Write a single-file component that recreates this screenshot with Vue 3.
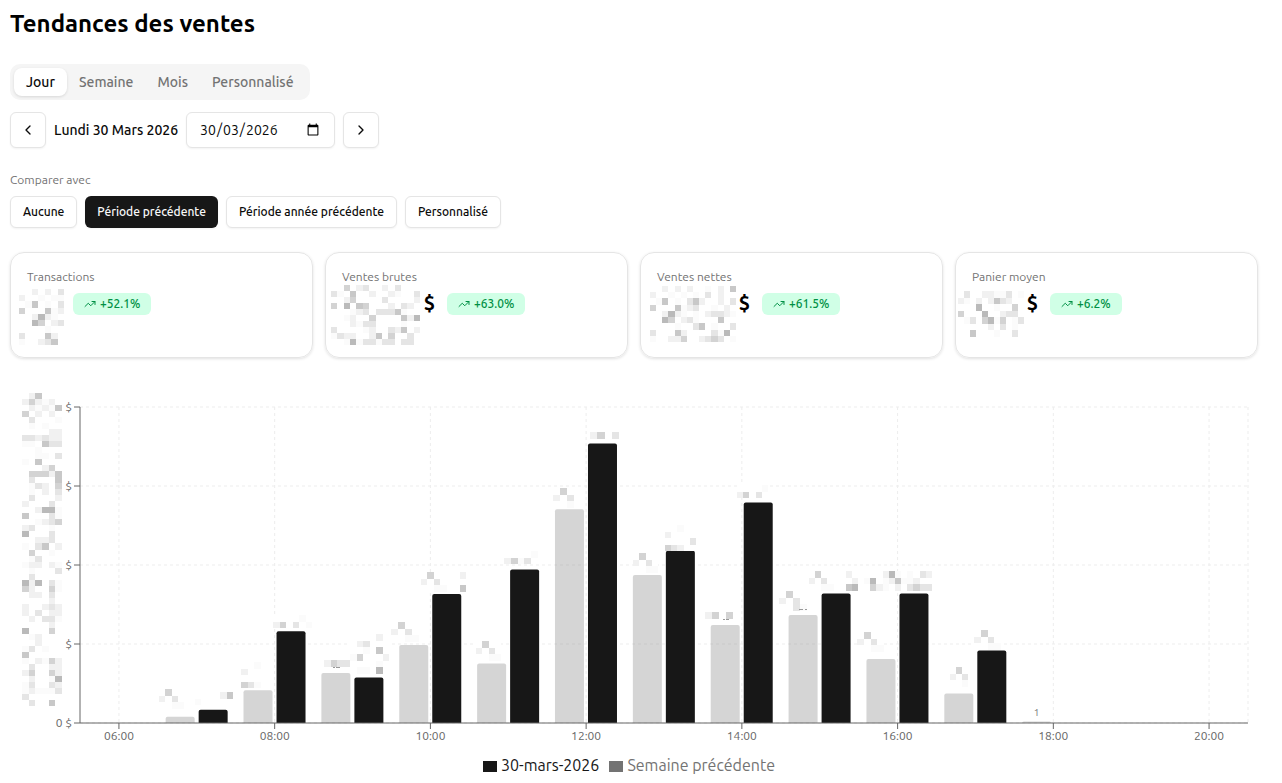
<script setup>
import { ref, computed, onMounted, onBeforeUnmount } from 'vue'

const tabs = ['Jour', 'Semaine', 'Mois', 'Personnalisé']
const activeTab = ref('Jour')
const comparisons = ['Aucune', 'Période précédente', 'Période année précédente', 'Personnalisé']
const activeComparison = ref('Période précédente')
const date = ref('2026-03-30')

// Masked figures are drawn as small mosaics: one character per cell, 1 (faint) to 6 (dark).
const shades = ['', '#fbfbfb', '#f1f1f1', '#e5e5e5', '#d3d3d3', '#c8c8c8', '#bababa']
const cells = (rows) =>
  rows.flatMap((row, y) =>
    [...row].flatMap((c, x) => (c === '.' ? [] : [{ x, y, fill: shades[Number(c)] }]))
  )

const cards = [
  {
    label: 'Transactions', trend: '+52.1%', width: 38, currency: '',
    mask: { x: -8, y: 0, w: 45, h: 56, rows: ['..2.2.3', '2..1.11', '.15.1.3', '4...512', '..2621.', '..64.23', '....1..', '3...52.', '1..235.'] }
  },
  {
    label: 'Ventes brutes', trend: '+63.0%', width: 97, currency: '$',
    mask: { x: -11, y: -4, w: 89, h: 60, rows: ['..4.23..2.3...', '31.5..2..21..3', '..24....3....2', '4.6.54...2.32.', '...123.33351..', '..12..4....526', '...2133....1..', '3....12..325.2', '1322..25.4..3.', '..16133133.33.'] }
  },
  {
    label: 'Ventes nettes', trend: '+61.5%', width: 97, currency: '$',
    mask: { x: -7, y: -3, w: 86, h: 56, rows: ['..2.2.2..1.2.5', '2..1.1.1.3.2..', '.15.1.352..2.3', '4...5123..1.2.', '..2621.1.23321', '..64.231...5..', '....1..35.1..3', '3...52....316.', '1..224..2343.1'] }
  },
  {
    label: 'Panier moyen', trend: '+6.2%', width: 70, currency: '$',
    mask: { x: -14, y: 2, w: 66, h: 46, rows: ['.3..22113.1', '21.2.2532..', '...6..1..4.', '4...6..233.', '.13.4614.13', '.....2.3.1.', '..5...1..3.'] }
  }
]

const axisMask = [
  '.25...', '24212.', '.21215', '4.2.2.', '.3...1', '.1.1..', '....22', '332322', '11.533', '..1...',
  '..11.3', '1.5...', '...24.', '.44425', '.3...5', '.132.4', '.1.2.3', '.3...2', '2...3.', '..2661',
  '5...31', '..1234', '23..1.', '6...3.', '..223.', '1.35.2', '.4..1.', '.13...', '122.21', '.1...3',
  '.3....', '626.31', '42..41', '.22.3.', '....2.', '2..232', '2.3.22', '.2.331', '....2.', '6...4.',
  '.12...', '..2...', '13.1..', '5.....', '1.2142', '.3..22', '24..42', '.2..16', '13..32', '121113',
  '3.....', '.3..5.'
]

const peak = ['.4..', '2.3.', '..11']
const maxValue = 3160
// prev / curr: bar values; prevMask / currMask: [dx, dy, rows, width] relative to the bar's top left corner.
const hours = [
  { hour: '06:00' },
  { hour: '07:00', prev: 63, prevMask: [-7, -28, peak, 25], curr: 133, currMask: [-4, -18, ['....25', '1.....'], 38] },
  { hour: '08:00', prev: 327, prevMask: [-3, -28, ['..1', '2..', '...', '431'], 20], curr: 918, currMask: [-4, -16, ['....1.', '24.3.1'], 39] },
  { hour: '09:00', prev: 500, prevMask: [3, -13, ['2433'], 26], residue: [[12, 2], [15, 4]], curr: 455, currMask: [-4, -44, ['....2.', '.23...', '..1.5.', '14...2', '....1.', '.11.6.'], 39] },
  { hour: '10:00', prev: 779, prevMask: [-8, -23, peak, 28], curr: 1289, currMask: [-11, -22, ['.4....2', '2.3....', '..11..5'], 45] },
  { hour: '11:00', prev: 596, prevMask: [-1, -22, peak, 25], curr: 1536, currMask: [-6, -18, ['....1', '2413.'], 34] },
  { hour: '12:00', prev: 2138, prevMask: [-2, -21, ['.4..', '2.3.', '..1.'], 28], curr: 2794, currMask: [2, -12, ['24.3'], 29] },
  { hour: '13:00', prev: 1480, prevMask: [0, -22, peak, 25], curr: 1722, currMask: [-1, -26, ['..1..', '2....', '....3', '432..'], 31] },
  { hour: '14:00', prev: 980, prevMask: [-6, -13, ['24.4'], 28], residue: [[12, 2], [15, 3]], curr: 2204, currMask: [-7, -18, ['....1', '24.3.'], 31] },
  { hour: '15:00', prev: 1080, prevMask: [-10, -24, ['.4..', '2.3.', '..31'], 28], residue: [[10, 4], [16, 2]], curr: 1296, currMask: [-13, -22, ['.4....2.', '2.3....2', '..11..56'], 49] },
  { hour: '16:00', prev: 641, prevMask: [-9, -27, peak, 27], curr: 1296, currMask: [-35, -22, ['...261.1.32', '16.125112..', '.421.2.3433'], 68] },
  { hour: '17:00', prev: 296, prevMask: [6, -26, ['.4.', '2.3', '..1'], 18], curr: 725, currMask: [-3, -21, peak, 27] },
  { hour: '18:00', prev: 16, prevLabel: '1' },
  { hour: '19:00' },
  { hour: '20:00' }
]

const chart = ref(null)
const width = ref(1248)
let observer
onMounted(() => {
  const measure = () => { width.value = Math.round(chart.value.clientWidth) }
  measure()
  observer = new ResizeObserver(measure)
  observer.observe(chart.value)
})
onBeforeUnmount(() => observer && observer.disconnect())

const height = 366
const plot = computed(() => ({ left: 70, right: width.value - 10, top: 25, bottom: 341 }))
const band = computed(() => (plot.value.right - plot.value.left) / hours.length)
const barWidth = computed(() => Math.max(2, Math.floor((band.value * 0.8 - 4) / 2)))
const yTicks = [0, 79, 158, 237, 316].map((v) => ({ y: 341 - v, label: v ? '$' : '0 $' }))
const xTicks = computed(() =>
  hours
    .map((h, i) => ({ label: h.hour, x: plot.value.left + band.value * (i + 0.5) }))
    .filter((_, i) => i % 2 === 0)
)
const bars = computed(() =>
  hours.flatMap((h, i) => {
    const start = plot.value.left + band.value * (i + 0.1)
    const bottom = plot.value.bottom
    const scale = (bottom - plot.value.top) / maxValue
    const out = []
    const add = (kind, x, value, mask, label, residue = []) => {
      const top = bottom - value * scale
      const r = Math.min(2, value * scale)
      out.push({
        id: kind + h.hour, kind, x, top, label, residue,
        d: `M${x},${bottom}V${top + r}Q${x},${top} ${x + r},${top}H${x + barWidth.value - r}Q${x + barWidth.value},${top} ${x + barWidth.value},${top + r}V${bottom}Z`,
        mask: mask && { x: Math.round(x + mask[0]), y: Math.round(top + mask[1]), w: mask[3], h: Math.round(mask[2].length * 6.6), rows: mask[2] }
      })
    }
    if (h.prev) add('prev', start, h.prev, h.prevMask, h.prevLabel, h.residue)
    if (h.curr) add('curr', start + barWidth.value + 4, h.curr, h.currMask)
    return out
  })
)
</script>

<template>
  <main class="page">
    <h1>Tendances des ventes</h1>

    <div class="tabs" role="tablist" aria-label="Période">
      <button
        v-for="tab in tabs" :key="tab" type="button" role="tab" class="tab"
        :class="{ active: tab === activeTab }" :aria-selected="tab === activeTab" @click="activeTab = tab"
      >{{ tab }}</button>
    </div>

    <div class="date-row">
      <button type="button" class="square" aria-label="Jour précédent">
        <svg class="icon" viewBox="0 0 24 24"><path d="m15 18-6-6 6-6" /></svg>
      </button>
      <label class="day" for="date">Lundi 30 Mars 2026</label>
      <input id="date" v-model="date" class="date-field" type="date" lang="fr">
      <button type="button" class="square" aria-label="Jour suivant">
        <svg class="icon" viewBox="0 0 24 24"><path d="m9 18 6-6-6-6" /></svg>
      </button>
    </div>

    <section class="compare" aria-labelledby="compare-title">
      <p id="compare-title" class="caption">Comparer avec</p>
      <div class="options">
        <button
          v-for="item in comparisons" :key="item" type="button" class="option"
          :class="{ active: item === activeComparison }" :aria-pressed="item === activeComparison"
          @click="activeComparison = item"
        >{{ item }}</button>
      </div>
    </section>

    <section class="cards">
      <article v-for="card in cards" :key="card.label" class="card">
        <p class="caption">{{ card.label }}</p>
        <div class="figures">
          <div class="value" :style="{ width: card.width + 'px' }">
            <svg
              class="mask" :viewBox="`0 0 ${card.mask.rows[0].length} ${card.mask.rows.length}`" preserveAspectRatio="none"
              :style="{ left: card.mask.x + 'px', top: card.mask.y + 'px', width: card.mask.w + 'px', height: card.mask.h + 'px' }"
            >
              <rect v-for="c in cells(card.mask.rows)" :key="c.x + '-' + c.y" :x="c.x" :y="c.y" width="1" height="1" :fill="c.fill" />
            </svg>
            <span>{{ card.currency }}</span>
          </div>
          <span class="badge">
            <svg class="icon" viewBox="0 0 24 24"><path d="M16 7h6v6" /><path d="m22 7-8.5 8.5-5-5L2 17" /></svg>
            {{ card.trend }}
          </span>
        </div>
      </article>
    </section>

    <section ref="chart" class="chart">
      <svg class="plot" :width="width" :height="height" role="img" aria-label="Ventes par heure">
        <g class="grid">
          <line v-for="t in yTicks" :key="'h' + t.y" :x1="plot.left" :x2="plot.right" :y1="t.y" :y2="t.y" />
          <line v-for="t in xTicks" :key="'v' + t.label" :x1="t.x" :x2="t.x" :y1="plot.top" :y2="plot.bottom" />
          <line :x1="plot.right" :x2="plot.right" :y1="plot.top" :y2="plot.bottom" />
        </g>
        <path v-for="b in bars" :key="b.id" :d="b.d" :class="b.kind" />
        <g class="axis">
          <line :x1="plot.left" :x2="plot.left" :y1="plot.top" :y2="plot.bottom" />
          <line :x1="plot.left" :x2="plot.right" :y1="plot.bottom" :y2="plot.bottom" />
          <line v-for="t in yTicks" :key="'y' + t.y" :x1="plot.left - 6" :x2="plot.left" :y1="t.y" :y2="t.y" />
          <line v-for="t in xTicks" :key="'x' + t.label" :x1="t.x" :x2="t.x" :y1="plot.bottom" :y2="plot.bottom + 6" />
        </g>
        <g class="ticks">
          <text v-for="t in yTicks" :key="t.y" :x="plot.left - 8" :y="t.y + 4" text-anchor="end">{{ t.label }}</text>
          <text v-for="t in xTicks" :key="t.label" :x="t.x" :y="plot.bottom + 17" text-anchor="middle">{{ t.label }}</text>
        </g>
        <template v-for="b in bars" :key="'m' + b.id">
          <svg
            v-if="b.mask" :x="b.mask.x" :y="b.mask.y" :width="b.mask.w" :height="b.mask.h"
            :viewBox="`0 0 ${b.mask.rows[0].length} ${b.mask.rows.length}`" preserveAspectRatio="none" shape-rendering="crispEdges"
          >
            <rect :width="b.mask.rows[0].length" :height="b.mask.rows.length" fill="#fff" />
            <rect v-for="c in cells(b.mask.rows)" :key="c.x + '-' + c.y" :x="c.x" :y="c.y" width="1" height="1" :fill="c.fill" />
          </svg>
          <rect v-for="r in b.residue" :key="r[0]" class="residue" :x="Math.round(b.x) + r[0]" :y="Math.round(b.top) - 6" :width="r[1]" height="1" />
          <text v-if="b.label" class="bar-label" :x="b.x + barWidth / 2" :y="b.top - 5" text-anchor="middle">{{ b.label }}</text>
        </template>
        <svg x="12" y="11" width="40" height="313" viewBox="0 0 6 52" preserveAspectRatio="none" shape-rendering="crispEdges">
          <rect v-for="c in cells(axisMask)" :key="c.x + '-' + c.y" :x="c.x" :y="c.y" width="1" height="1" :fill="c.fill" />
        </svg>
      </svg>
      <ul class="legend">
        <li class="current">30-mars-2026</li>
        <li class="previous">Semaine précédente</li>
      </ul>
    </section>
  </main>
</template>

<style>
body {
  margin: 0;
  background: #fff;
}
</style>

<style scoped>
.page {
  padding: 8px 24px 6px 10px;
  color: #0a0a0a;
  font-family: Ubuntu, "Noto Sans", sans-serif;
  font-size: 14px;
  line-height: 20px;
}
h1 {
  margin: 0 0 24px;
  font-size: 24px;
  line-height: 32px;
  font-weight: 700;
  color: #000;
}
p {
  margin: 0;
}
button,
input {
  font: inherit;
  color: inherit;
}
button {
  cursor: pointer;
}
.icon {
  fill: none;
  stroke: currentColor;
  stroke-width: 2;
  stroke-linecap: round;
  stroke-linejoin: round;
}
.tabs {
  display: flex;
  width: fit-content;
  box-sizing: border-box;
  height: 36px;
  padding: 4px;
  border-radius: 10px;
  background: #f5f5f5;
}
.tab {
  padding: 0 12px;
  border: 0;
  border-radius: 8px;
  background: none;
  color: #737373;
  font-weight: 500;
}
.tab.active {
  background: #fff;
  color: #0a0a0a;
  box-shadow: 0 1px 3px rgba(0, 0, 0, 0.12);
}
.date-row {
  display: flex;
  align-items: center;
  gap: 8px;
  margin-top: 12px;
}
.square {
  display: grid;
  place-items: center;
  width: 36px;
  height: 36px;
  padding: 0;
  border: 1px solid #e5e5e5;
  border-radius: 6px;
  background: #fff;
  box-shadow: 0 1px 2px rgba(0, 0, 0, 0.05);
}
.square .icon {
  width: 16px;
  height: 16px;
}
.day {
  font-weight: 500;
}
.date-field {
  box-sizing: border-box;
  width: 149px;
  height: 36px;
  padding: 4px 12px;
  border: 1px solid #e5e5e5;
  border-radius: 6px;
  background: #fff;
  box-shadow: 0 1px 2px rgba(0, 0, 0, 0.05);
}
/* Day / month / year order whatever the browser's own locale: the separators fill the free columns. */
.date-field::-webkit-datetime-edit-fields-wrapper {
  display: inline-grid;
  grid-template-columns: repeat(5, auto);
}
.date-field::-webkit-datetime-edit-day-field {
  grid-area: 1 / 1;
}
.date-field::-webkit-datetime-edit-month-field {
  grid-area: 1 / 3;
}
.date-field::-webkit-datetime-edit-year-field {
  grid-area: 1 / 5;
}
.date-field::-webkit-datetime-edit-text {
  grid-row: 1;
}
.compare {
  margin-top: 24px;
}
.caption {
  color: #737373;
  font-size: 12px;
  line-height: 16px;
}
.options {
  display: flex;
  flex-wrap: wrap;
  gap: 8px;
  margin-top: 8px;
}
.option {
  height: 32px;
  padding: 0 12px;
  border: 1px solid #e5e5e5;
  border-radius: 6px;
  background: #fff;
  font-size: 12px;
  line-height: 16px;
  font-weight: 500;
  box-shadow: 0 1px 2px rgba(0, 0, 0, 0.05);
}
.option.active {
  border: 0;
  background: #171717;
  color: #fafafa;
}
.cards {
  display: grid;
  grid-template-columns: repeat(4, 1fr);
  gap: 12px;
  margin-top: 24px;
}
.card {
  box-sizing: border-box;
  min-height: 106px;
  padding: 16px;
  border: 1px solid #e5e5e5;
  border-radius: 14px;
  box-shadow: 0 1px 3px rgba(0, 0, 0, 0.12);
}
.figures {
  display: flex;
  align-items: flex-start;
  gap: 8px;
  margin-top: 4px;
}
.value {
  position: relative;
  display: flex;
  justify-content: flex-end;
  height: 28px;
  padding-right: 4px;
  box-sizing: border-box;
  color: #000;
  font-size: 20px;
  line-height: 28px;
  font-weight: 700;
}
.mask {
  position: absolute;
  shape-rendering: crispEdges;
}
.badge {
  display: flex;
  align-items: center;
  gap: 4px;
  height: 22px;
  margin-top: 4px;
  padding: 0 11px;
  border-radius: 6px;
  background: #d0ffe6;
  color: #009045;
  font-size: 12px;
  line-height: 16px;
  font-weight: 500;
}
.badge .icon {
  width: 12px;
  height: 12px;
}
.chart {
  margin-top: 24px;
}
.plot {
  display: block;
}
.grid line {
  stroke: #ededed;
  stroke-dasharray: 3 3;
}
.axis line {
  stroke: #666;
}
.ticks text {
  fill: #666;
  font-size: 12px;
}
.prev {
  fill: #737373;
  fill-opacity: 0.3;
}
.curr {
  fill: #171717;
}
.residue {
  fill: #999;
}
.bar-label {
  fill: #737373;
  font-size: 10px;
}
.legend {
  display: flex;
  justify-content: center;
  gap: 10px;
  margin: 5px 0 0;
  padding: 0 10px 0 0;
  list-style: none;
  font-size: 16px;
  line-height: 24px;
}
.legend li {
  display: flex;
  align-items: center;
  gap: 4px;
}
.legend li::before {
  content: "";
  width: 14px;
  height: 11px;
  margin-top: 3px;
  background: currentColor;
}
.current {
  color: #171717;
}
.previous {
  color: #737373;
}
</style>
